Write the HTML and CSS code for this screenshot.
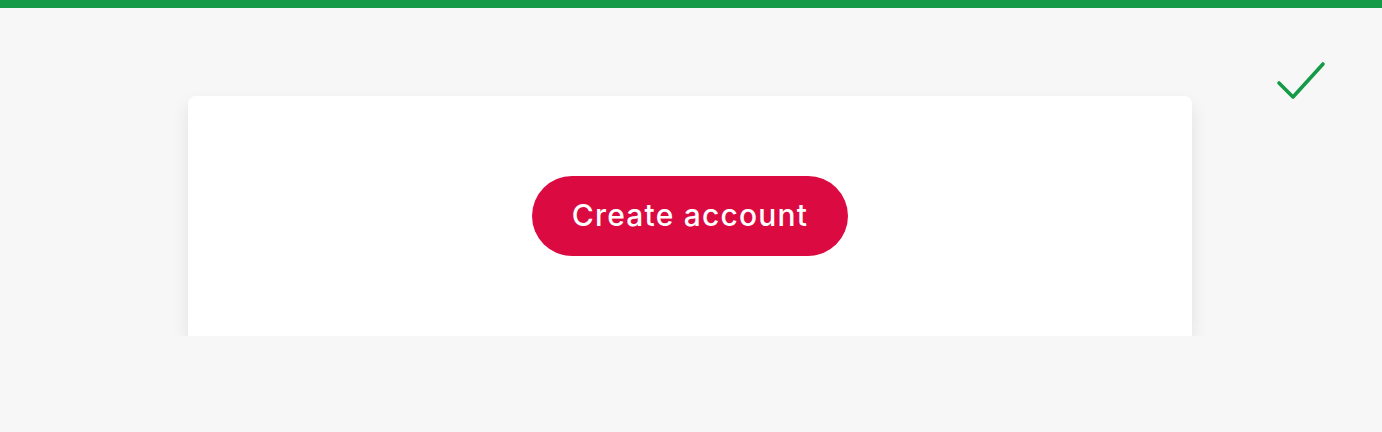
FILE: index.html
```html
<!DOCTYPE html>
<html lang="en">
<head>
<meta charset="utf-8">
<title>Create account</title>
<link rel="stylesheet" href="styles.css">
</head>
<body>
<div class="topbar"></div>
<main class="page">
  <svg class="status-check" width="50" height="40" viewBox="0 0 50 40" aria-hidden="true">
    <polyline points="3,22 17,36 47,3" fill="none" stroke="#159a48" stroke-width="3.6" stroke-linecap="round" stroke-linejoin="round"/>
  </svg>
  <section class="card">
    <button class="btn-primary" type="button">Create account</button>
  </section>
</main>
</body>
</html>
```
FILE: styles.css
```css
html, body {
  margin: 0;
  padding: 0;
  background: #f7f7f7;
  font-family: Inter, "Noto Sans", "Liberation Sans", sans-serif;
}
.topbar {
  height: 8px;
  background: #159a48;
}
.page {
  position: relative;
  padding-top: 88px;
  display: flex;
  justify-content: center;
  padding-right: 2px;
}
.status-check {
  position: absolute;
  left: 1276px;
  top: 53px;
}
.card {
  width: 1004px;
  height: 240px;
  box-sizing: border-box;
  background: #ffffff;
  border-radius: 8px 8px 0 0;
  box-shadow: 0 8px 18px rgba(0, 0, 0, 0.09);
  display: flex;
  align-items: center;
  justify-content: center;
}
.btn-primary {
  height: 80px;
  width: 316px;
  border: none;
  border-radius: 40px;
  background: #db0a40;
  color: #ffffff;
  font-family: Inter, "Noto Sans", "Liberation Sans", sans-serif;
  font-size: 30px;
  font-weight: 500;
  letter-spacing: 1.2px;
  padding: 0 0 2px;
  cursor: pointer;
}
```
